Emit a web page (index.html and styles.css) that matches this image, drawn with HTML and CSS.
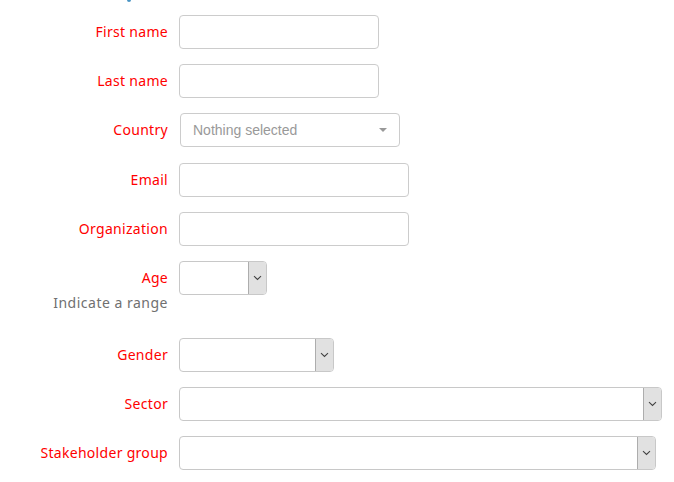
FILE: index.html
```html
<!DOCTYPE html>
<html>
<head>
<meta charset="utf-8">
<link rel="stylesheet" href="styles.css">
</head>
<body>
<div class="top-mark"><span class="blue-dot"></span></div>
<form class="form">
  <div class="row">
    <div class="label-col"><label class="label">First name</label></div>
    <div class="field"><input class="input w200" type="text"></div>
  </div>
  <div class="row">
    <div class="label-col"><label class="label">Last name</label></div>
    <div class="field"><input class="input w200" type="text"></div>
  </div>
  <div class="row row-country">
    <div class="label-col"><label class="label">Country</label></div>
    <div class="field">
      <div class="bs-select w220"><span class="placeholder">Nothing selected</span><span class="caret"></span></div>
    </div>
  </div>
  <div class="row">
    <div class="label-col"><label class="label">Email</label></div>
    <div class="field"><input class="input w230" type="text"></div>
  </div>
  <div class="row">
    <div class="label-col"><label class="label">Organization</label></div>
    <div class="field"><input class="input w230" type="text"></div>
  </div>
  <div class="row">
    <div class="label-col">
      <label class="label">Age</label>
      <div class="help">Indicate a range</div>
    </div>
    <div class="field"><div class="select w88"><span class="arrow"><svg width="9" height="6" viewBox="0 0 9 6"><path d="M1 1.2 L4.5 4.5 L8 1.2" fill="none" stroke="#444" stroke-width="1.1"/></svg></span></div></div>
  </div>
  <div class="row">
    <div class="label-col"><label class="label">Gender</label></div>
    <div class="field"><div class="select w155"><span class="arrow"><svg width="9" height="6" viewBox="0 0 9 6"><path d="M1 1.2 L4.5 4.5 L8 1.2" fill="none" stroke="#444" stroke-width="1.1"/></svg></span></div></div>
  </div>
  <div class="row">
    <div class="label-col"><label class="label">Sector</label></div>
    <div class="field"><div class="select w483"><span class="arrow"><svg width="9" height="6" viewBox="0 0 9 6"><path d="M1 1.2 L4.5 4.5 L8 1.2" fill="none" stroke="#444" stroke-width="1.1"/></svg></span></div></div>
  </div>
  <div class="row">
    <div class="label-col"><label class="label">Stakeholder group</label></div>
    <div class="field"><div class="select w477"><span class="arrow"><svg width="9" height="6" viewBox="0 0 9 6"><path d="M1 1.2 L4.5 4.5 L8 1.2" fill="none" stroke="#444" stroke-width="1.1"/></svg></span></div></div>
  </div>
</form>
</body>
</html>
```

FILE: styles.css
```css
html, body {
  margin: 0;
  padding: 0;
  background: #fff;
}
body {
  font-family: "Noto Sans", "DejaVu Sans", sans-serif;
  font-size: 14px;
}
.top-mark {
  position: relative;
  height: 0;
}
.blue-dot {
  position: absolute;
  left: 127px;
  top: -2px;
  width: 4px;
  height: 4px;
  border-radius: 50%;
  background: #4a95c4;
}
.form {
  padding-top: 15px;
}
.row {
  display: grid;
  grid-template-columns: 168px auto;
  column-gap: 11px;
  margin-bottom: 15px;
  align-items: start;
}
.row-country {
  margin-bottom: 16px;
}
.label-col {
  display: flex;
  flex-direction: column;
  align-items: flex-end;
}
.label {
  color: #ff0000;
  line-height: 34px;
  height: 34px;
  white-space: nowrap;
  letter-spacing: 0.3px;
}
.help {
  color: #707070;
  line-height: 20px;
  margin-top: -2px;
  margin-bottom: 10px;
  white-space: nowrap;
  letter-spacing: 0.5px;
}
.field {
  display: flex;
}
.input {
  box-sizing: border-box;
  height: 34px;
  border: 1px solid #ccc;
  border-radius: 4px;
  margin: 0;
  padding: 0 12px;
  background: #fff;
}
.w200 { width: 200px; }
.w220 { width: 220px; }
.w230 { width: 230px; }
.w88 { width: 88px; }
.w155 { width: 155px; }
.w483 { width: 483px; }
.w477 { width: 477px; }
.bs-select {
  box-sizing: border-box;
  height: 34px;
  margin-left: 1px;
  border: 1px solid #ccc;
  border-radius: 4px;
  display: flex;
  align-items: center;
  justify-content: space-between;
  padding: 0 12px 0 12px;
}
.placeholder {
  font-family: "Liberation Sans", Arial, sans-serif;
  color: #999;
  font-size: 14px;
}
.caret {
  width: 0;
  height: 0;
  border-left: 4px solid transparent;
  border-right: 4px solid transparent;
  border-top: 4px solid #999;
}
.select {
  box-sizing: border-box;
  height: 34px;
  border: 1px solid #c8c8c8;
  border-radius: 4px;
  display: flex;
  justify-content: flex-end;
  overflow: hidden;
  background: #fff;
}
.arrow {
  width: 17px;
  background: #e1e1e1;
  border-left: 1px solid #adadad;
  display: flex;
  align-items: center;
  justify-content: center;
}
```
